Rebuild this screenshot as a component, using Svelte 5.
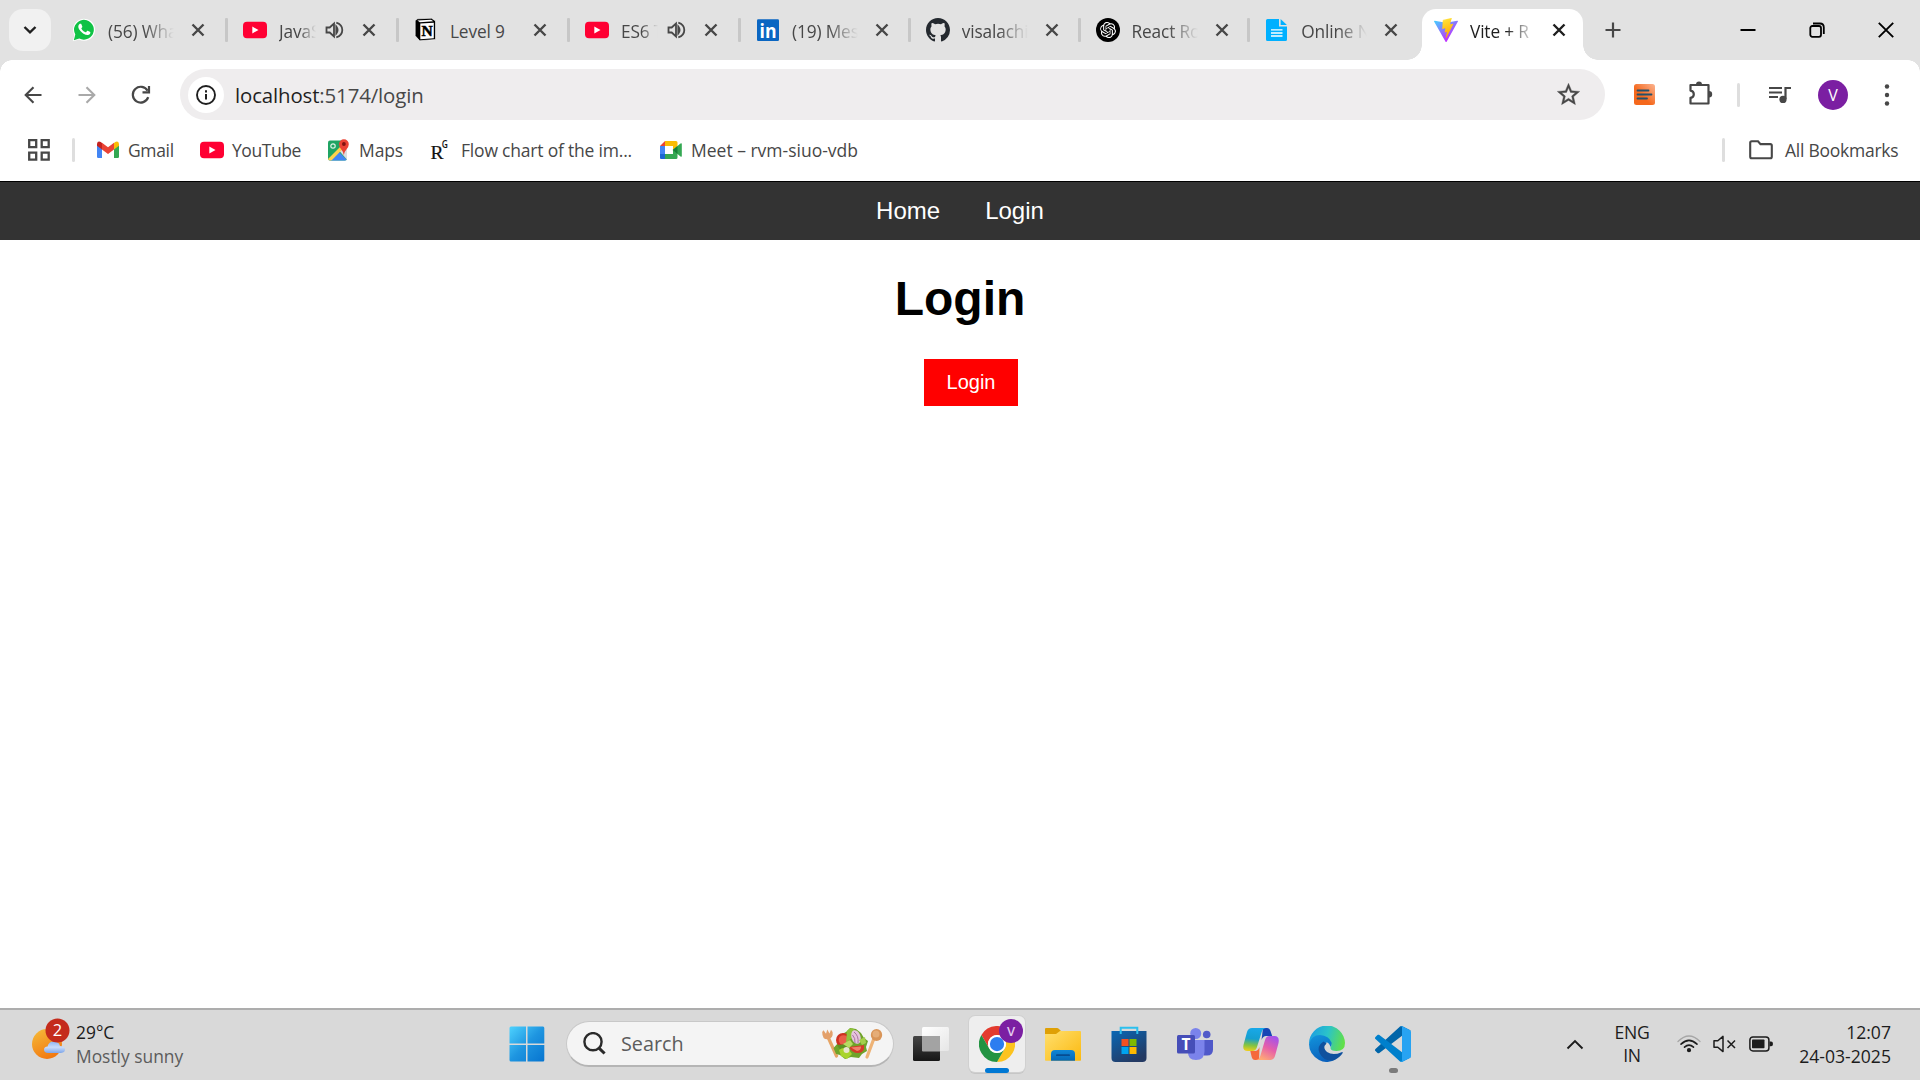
<script>
  const tabs = [
    { icon: 'whatsapp', title: '(56) Wha' },
    { icon: 'youtube', title: 'JavaS', audio: true },
    { icon: 'notion', title: 'Level 9' },
    { icon: 'youtube', title: 'ES6 T', audio: true },
    { icon: 'linkedin', title: '(19) Mes' },
    { icon: 'github', title: 'visalachi' },
    { icon: 'openai', title: 'React Ro' },
    { icon: 'notepad', title: 'Online N' },
    { icon: 'vite', title: 'Vite + R', active: true }
  ];
  const bookmarks = [
    { icon: 'gmail', title: 'Gmail', cls: 'b-gmail' },
    { icon: 'youtube', title: 'YouTube', cls: 'b-youtube' },
    { icon: 'maps', title: 'Maps', cls: 'b-maps' },
    { icon: 'rg', title: 'Flow chart of the im...', cls: 'b-flow' },
    { icon: 'meet', title: 'Meet – rvm-siuo-vdb', cls: 'b-meet' }
  ];
  const apps = ['taskview', 'chrome', 'explorer', 'store', 'teams', 'copilot', 'edge', 'vscode'];
</script>

{#snippet favicon(name)}
  <svg class="fav" width="24" height="24" viewBox="0 0 24 24">
    {#if name === 'whatsapp'}
      <path d="M.8 23.2 2.4 17A11 11 0 1 1 7 21.500Z" fill="#fff" />
      <path d="M1.800 22.200 3.300 16.600A9.900 9.900 0 1 1 7.300 20.500Z" fill="#10c245" />
      <path fill="#fff" transform="translate(.3 -.6)" d="M17.472 14.382c-.297-.149-1.758-.867-2.03-.967-.273-.099-.471-.148-.67.15-.197.297-.767.966-.94 1.164-.173.199-.347.223-.644.075-.297-.15-1.255-.463-2.39-1.475-.883-.788-1.48-1.761-1.653-2.059-.173-.297-.018-.458.13-.606.134-.133.298-.347.446-.52.149-.174.198-.298.298-.497.099-.198.05-.371-.025-.52-.075-.149-.669-1.612-.916-2.207-.242-.579-.487-.5-.669-.51-.173-.008-.371-.01-.57-.01-.198 0-.52.074-.792.372-.272.297-1.04 1.016-1.04 2.479 0 1.462 1.065 2.875 1.213 3.074.149.198 2.096 3.2 5.077 4.487.709.306 1.262.489 1.694.625.712.227 1.36.195 1.871.118.571-.085 1.758-.719 2.006-1.413.248-.694.248-1.289.173-1.413-.074-.124-.272-.198-.57-.347z" />
    {:else if name === 'youtube'}
      <rect x="0" y="3.700" width="24" height="16.600" rx="4" fill="#ff0033" />
      <path d="M9.300 8.600v6.800l6.200-3.400z" fill="#fff" />
    {:else if name === 'notion'}
      <path d="M1.200 2.600 3.600.8 17.500.2l4 2.800v18.500l-15.800 1.300-4.500-5z" fill="#000" stroke="#fff" stroke-width=".6" />
      <path d="M6.300 5.600 19.800 4.800v15.500L6.300 21.200z" fill="#fff" />
      <path d="M3.400 2.600 17 1.800l2.300 1.500-13.400.9z" fill="#fff" />
      <text x="13" y="18.300" text-anchor="middle" font-family="Liberation Serif, serif" font-weight="700" font-size="15.500" fill="#000" stroke="#000" stroke-width=".5">N</text>
    {:else if name === 'linkedin'}
      <rect x="1" y="1.200" width="22" height="21.800" rx="1.200" fill="#0a66c2" />
      <text x="12" y="19.600" text-anchor="middle" font-family="Open Sans, sans-serif" font-weight="700" font-size="19.500" textLength="17" lengthAdjust="spacingAndGlyphs" fill="#fff">in</text>
    {:else if name === 'github'}
      <path transform="scale(1.5)" fill="#24292f" d="M8 0C3.580 0 0 3.580 0 8c0 3.540 2.290 6.530 5.470 7.590.4.070.55-.17.55-.38 0-.19-.01-.82-.01-1.490-2.010.37-2.530-.49-2.690-.94-.09-.23-.48-.94-.82-1.130-.28-.15-.68-.52-.01-.53.63-.01 1.080.58 1.230.82.72 1.210 1.870.87 2.330.66.070-.52.28-.87.51-1.070-1.780-.2-3.640-.89-3.640-3.950 0-.87.31-1.590.82-2.150-.08-.2-.36-1.020.08-2.120 0 0 .67-.21 2.200.82a7.600 7.600 0 0 1 4 0c1.530-1.040 2.200-.82 2.200-.82.44 1.100.16 1.920.08 2.120.51.56.82 1.270.82 2.150 0 3.070-1.870 3.750-3.650 3.950.29.25.54.73.54 1.480 0 1.070-.01 1.930-.01 2.200 0 .21.15.46.55.38A8 8 0 0 0 16 8c0-4.420-3.580-8-8-8z" />
    {:else if name === 'openai'}
      <circle cx="12" cy="12" r="12" fill="#000" />
      <path transform="translate(4 4) scale(.667)" fill="#fff" d="M22.2819 9.8211a5.9847 5.9847 0 0 0-.5157-4.9108 6.0462 6.0462 0 0 0-6.5098-2.9A6.0651 6.0651 0 0 0 4.9807 4.1818a5.9847 5.9847 0 0 0-3.9977 2.9 6.0462 6.0462 0 0 0 .7427 7.0966 5.98 5.98 0 0 0 .511 4.9107 6.051 6.051 0 0 0 6.5146 2.9001A5.9847 5.9847 0 0 0 13.2599 24a6.0557 6.0557 0 0 0 5.7718-4.2058 5.9894 5.9894 0 0 0 3.9977-2.9001 6.0557 6.0557 0 0 0-.7475-7.0729zm-9.022 12.6081a4.4755 4.4755 0 0 1-2.8764-1.0408l.1419-.0804 4.7783-2.7582a.7948.7948 0 0 0 .3927-.6813v-6.7369l2.02 1.1686a.071.071 0 0 1 .038.052v5.5826a4.504 4.504 0 0 1-4.4945 4.4944zm-9.6607-4.1254a4.4708 4.4708 0 0 1-.5346-3.0137l.142.0852 4.783 2.7582a.7712.7712 0 0 0 .7806 0l5.8428-3.3685v2.3324a.0804.0804 0 0 1-.0332.0615L9.74 19.9502a4.4992 4.4992 0 0 1-6.1408-1.6464zM2.3408 7.8956a4.485 4.485 0 0 1 2.3655-1.9728V11.6a.7664.7664 0 0 0 .3879.6765l5.8144 3.3543-2.0201 1.1685a.0757.0757 0 0 1-.071 0l-4.8303-2.7865A4.504 4.504 0 0 1 2.3408 7.872zm16.5963 3.8558L13.1038 8.364 15.1192 7.2a.0757.0757 0 0 1 .071 0l4.8303 2.7913a4.4944 4.4944 0 0 1-.6765 8.1042v-5.6772a.79.79 0 0 0-.407-.667zm2.0107-3.0231l-.142-.0852-4.7735-2.7818a.7759.7759 0 0 0-.7854 0L9.409 9.2297V6.8974a.0662.0662 0 0 1 .0284-.0615l4.8303-2.7866a4.4992 4.4992 0 0 1 6.6802 4.66zM8.3065 12.863l-2.02-1.1638a.0804.0804 0 0 1-.038-.0567V6.0742a4.4992 4.4992 0 0 1 7.3757-3.4537l-.142.0805L8.704 5.459a.7948.7948 0 0 0-.3927.6813zm1.0976-2.3654l2.602-1.4998 2.6069 1.4998v2.9994l-2.5974 1.4997-2.6067-1.4997Z" />
    {:else if name === 'notepad'}
      <path d="M2.500 1H14v7.500h8V21.500q0 1.500-1.500 1.500h-18Q1 23 1 21.500v-19Q1 1 2.500 1z" fill="#00b0ff" />
      <path d="M15.600 1 21.900 7H15.600z" fill="#00b0ff" />
      <path d="M6 11.800h11.500M6 15h11.500M6 18h11.500" stroke="#fff" stroke-width="1.300" />
    {:else if name === 'vite'}
      <defs>
        <linearGradient id="v1" x1="0" y1="0" x2=".6" y2=".85"><stop stop-color="#41d1ff" /><stop offset="1" stop-color="#bd34fe" /></linearGradient>
        <linearGradient id="v2" x1=".4" y1="0" x2=".6" y2=".9"><stop stop-color="#ffea83" /><stop offset=".1" stop-color="#ffdd35" /><stop offset="1" stop-color="#ffa800" /></linearGradient>
      </defs>
      <g transform="scale(.0937)">
        <path fill="url(#v1)" d="M255.153 37.938L134.897 252.976c-2.483 4.440-8.862 4.466-11.382.048L.875 37.958c-2.746-4.814 1.371-10.646 6.827-9.670l120.385 21.517a6.537 6.537 0 0 0 2.322-.004l117.867-21.483c5.438-.991 9.574 4.796 6.877 9.620Z" />
        <path fill="url(#v2)" d="M185.432.063L96.440 17.501a3.268 3.268 0 0 0-2.634 3.014l-5.474 92.456a3.268 3.268 0 0 0 3.997 3.378l24.777-5.718c2.318-.535 4.413 1.507 3.936 3.838l-7.361 36.047c-.495 2.426 1.782 4.500 4.151 3.780l15.304-4.649c2.372-.72 4.652 1.360 4.150 3.788l-11.698 56.621c-.732 3.542 3.979 5.473 5.943 2.437l1.313-2.028l72.516-144.720c1.215-2.423-.88-5.186-3.540-4.672l-25.505 4.922c-2.396.462-4.435-1.770-3.759-4.114l16.646-57.705c.677-2.350-1.370-4.583-3.769-4.113Z" />
      </g>
    {:else if name === 'gmail'}
      <path d="M1 6.500v12.300q0 1.200 1.200 1.200H6v-9.500z" fill="#4285f4" />
      <path d="M23 6.500v12.300q0 1.200-1.200 1.200H18v-9.500z" fill="#34a853" />
      <path d="M18 5v6.500l5-3.800V6q-.5-3.500-3.800-2z" fill="#fbbc04" />
      <path d="M6 5v6.500L1 7.700V6q.5-3.500 3.800-2z" fill="#c5221f" />
      <path d="M6 4.800l6 4.500 6-4.500v6.700L12 16l-6-4.500z" fill="#ea4335" />
    {:else if name === 'maps'}
      <defs><clipPath id="mp"><rect x="1" y="2.500" width="19" height="20" rx="2" /></clipPath></defs>
      <g clip-path="url(#mp)">
        <rect x="1" y="2" width="20" height="21" fill="#1fa463" />
        <path d="M1 23 11 13 21 23z" fill="#4285f4" />
        <path d="M21 6v17L12 12.500z" fill="#dadce0" />
        <path d="M0 22 17.500 4.500l2.200 2.600L3 24z" fill="#ffd24d" />
        <circle cx="6" cy="8" r="2.200" fill="none" stroke="#d9f2e4" stroke-width="1.200" />
      </g>
      <path d="M16.800 17q-.3-3-2.300-5.200Q12 9 12 6.200A4.900 4.900 0 0 1 21.800 6.200Q21.800 9 19.200 11.800 17.200 14 16.800 17z" fill="#ea4335" />
      <circle cx="16.900" cy="6" r="1.900" fill="#811411" />
    {:else if name === 'rg'}
      <text x="1.500" y="20.800" font-family="Liberation Serif, serif" font-size="19.500" fill="#111" stroke="#111" stroke-width=".2">R</text>
      <text x="12.800" y="10" font-family="Open Sans, sans-serif" font-size="10" font-weight="600" textLength="6" lengthAdjust="spacingAndGlyphs" fill="#111">G</text>
    {:else if name === 'meet'}
      <path d="M6 3v5H1z" fill="#ea4335" />
      <path d="M1 8h5v8H1z" fill="#4285f4" />
      <path d="M1 16h5v5H2q-1 0-1-1z" fill="#1967d2" />
      <path d="M6 3h11q1.500 0 1.500 1.500V9L14 12V8H6z" fill="#fbbc04" />
      <path d="M6 16h8v-4l4.500 3v4.500q0 1.500-1.500 1.500H6z" fill="#34a853" />
      <path d="M13.700 12 21.500 5.500q1.300-.8 1.300.6v12q0 1.300-1.300.4z" fill="#34a853" />
      <path d="M13.700 12l4.800-4v8z" fill="#188038" />
    {/if}
  </svg>
{/snippet}

{#snippet app(name)}
  <svg width="36" height="36" viewBox="0 0 36 36">
    {#if name === 'taskview'}
      <defs>
        <linearGradient id="tv" x2="0" y2="1"><stop stop-color="#454545" /><stop offset="1" stop-color="#161616" /></linearGradient>
        <linearGradient id="tw" x2="1" y2="1"><stop stop-color="#fff" /><stop offset="1" stop-color="#e6e6e6" /></linearGradient>
      </defs>
      <rect x="0" y="10" width="27" height="25" rx="1.500" fill="url(#tv)" />
      <rect x="9" y="1" width="27" height="24" rx="1.500" fill="url(#tw)" />
      <path d="M9 10h18v15.500H10q-1 0-1-1z" fill="#a3a3a3" />
    {:else if name === 'chrome'}
      <g transform="scale(.75)">
        <path d="M24 12H44.800A24 24 0 0 0 3.200 12L13.600 30A12 12 0 0 1 24 12z" fill="#e33b2e" />
        <path d="M44.800 12A24 24 0 0 1 24 48L34.400 30A12 12 0 0 0 24 12z" fill="#fcc31e" />
        <path d="M24 48A24 24 0 0 1 3.200 12L13.600 30A12 12 0 0 0 34.400 30z" fill="#229342" />
        <circle cx="24" cy="24" r="12" fill="#fff" /><circle cx="24" cy="24" r="9.500" fill="#2c7df0" />
      </g>
    {:else if name === 'explorer'}
      <defs>
        <linearGradient id="ex" x2="1" y2="1"><stop stop-color="#ffdf6e" /><stop offset="1" stop-color="#fbb90f" /></linearGradient>
        <linearGradient id="ey" x2="0" y2="1"><stop stop-color="#0f86d6" /><stop offset="1" stop-color="#0668b6" /></linearGradient>
      </defs>
      <path d="M0 3q0-1 1-1h11q1 0 2 1l3 3v4H0z" fill="#dfa005" />
      <path d="M0 8h11l4-3h20q1 0 1 1v28q0 .8-.8.8H.8Q0 34.800 0 34z" fill="url(#ex)" />
      <path d="M6 34.800V28q0-4 4-4h16q4 0 4 4v6.800z" fill="url(#ey)" />
      <rect x="11" y="28.300" width="14" height="1.800" rx=".9" fill="#074c91" />
    {:else if name === 'store'}
      <defs><linearGradient id="st" x2=".6" y2="1"><stop stop-color="#0967b5" /><stop offset="1" stop-color="#243a63" /></linearGradient></defs>
      <path d="M9.700 8V1.800h16.600V8" fill="none" stroke="#2cc0ee" stroke-width="2" />
      <path d="M.5 5h35v27q0 4-4 4h-27q-4 0-4-4z" fill="url(#st)" />
      <path d="M9.700 5v3M26.300 5v3" stroke="#2cc0ee" stroke-width="2" />
      <path d="M10.500 13h7v7h-7z" fill="#f25022" /><path d="M18.500 13h7v7h-7z" fill="#7fba00" />
      <path d="M10.500 21h7v7h-7z" fill="#00a4ef" /><path d="M18.500 21h7v7h-7z" fill="#ffb900" />
    {:else if name === 'teams'}
      <circle cx="29.700" cy="8.500" r="3.800" fill="#5059c9" />
      <path d="M24 14h12v9.500q0 6-6 6h-3z" fill="#5059c9" />
      <circle cx="18.700" cy="7.500" r="5.500" fill="#7b83eb" />
      <path d="M11 14h16.500v11.500q0 8.500-8.500 8.500t-8-8.500z" fill="#7b83eb" />
      <rect x="0" y="9" width="18" height="18.500" rx="1.500" fill="#464eb8" />
      <text x="9" y="24" text-anchor="middle" font-family="Open Sans, sans-serif" font-weight="700" font-size="15.500" fill="#fff">T</text>
    {:else if name === 'copilot'}
      <defs>
        <linearGradient id="ca" x1=".3" y1="0" x2=".2" y2="1"><stop stop-color="#18a8e8" /><stop offset=".45" stop-color="#159fd0" /><stop offset=".75" stop-color="#86c43f" /><stop offset="1" stop-color="#f2cf1b" /></linearGradient>
        <linearGradient id="cb" x1=".8" y1="0" x2=".3" y2="1"><stop stop-color="#a052ee" /><stop offset=".5" stop-color="#e65fa9" /><stop offset="1" stop-color="#ffab75" /></linearGradient>
      </defs>
      <path d="M20 2h4q2.500 0 3.500 3l1.700 5H23q-3 0-4.500 4z" fill="#1746b5" />
      <path d="M9 2h14q-3.200.4-4.300 4L14 21q-1.200 4-4.500 4H4.500Q-1 25 .6 18.500L4 6q1.200-4 5-4z" fill="url(#ca)" />
      <path d="M16 34h-4q-2.500 0-3.300-3L7.300 25H12q3 0 4.500-4z" fill="#f56a3c" />
      <path d="M27 34H13q3.200-.4 4.300-4L22 14q1.200-4 4.500-4h5q5.500 0 3.900 7.500L32 30q-1.200 4-5 4z" fill="url(#cb)" />
    {:else if name === 'edge'}
      <defs>
        <linearGradient id="ea" x1="0" y1=".3" x2="1" y2=".5"><stop stop-color="#1b9de2" /><stop offset=".5" stop-color="#2bc3c9" /><stop offset="1" stop-color="#62e048" /></linearGradient>
        <linearGradient id="eb" x2=".3" y2="1"><stop stop-color="#1295dc" /><stop offset="1" stop-color="#0b62bd" /></linearGradient>
      </defs>
      <path d="M0 18A18 18 0 0 1 36 17Q36 25 27.500 25 21 25 21.500 21.500 23.500 19 21 15.500 17 11 10 11.500 3 12 0 18z" fill="url(#ea)" />
      <path d="M0 18Q2.500 9 11 9 20 9.500 22.500 16.500 23 19 21.500 21 19 13 14 19 10 27 18 32 21 34 27 33 19 38.500 10 34 0 28 0 18z" fill="url(#eb)" />
      <path d="M14.500 15.500Q7.500 20 10.500 27 15 36 25 34.200 31 31.500 33.700 27 34 25.500 32.500 26.200 24 30 18 26 13 21.500 17.500 17.500z" fill="#10519e" />
    {:else if name === 'vscode'}
      <g transform="scale(.36)">
        <path fill="#0065a9" d="M96.461 10.796L75.857.876C73.472-.273 70.622.212 68.750 2.083L1.299 63.583C-.516 65.237-.514 68.094 1.303 69.745L6.813 74.754C8.298 76.104 10.535 76.204 12.134 74.991L93.361 13.370C96.086 11.303 100 13.246 100 16.667V16.428C100 14.027 98.625 11.838 96.461 10.796Z" />
        <path fill="#0080cc" d="M96.461 89.204L75.857 99.125C73.472 100.273 70.622 99.788 68.750 97.917L1.299 36.417C-.516 34.763-.514 31.906 1.303 30.255L6.813 25.246C8.298 23.896 10.535 23.796 12.134 25.010L93.361 86.630C96.086 88.697 100 86.754 100 83.333V83.573C100 85.974 98.625 88.162 96.461 89.204Z" />
        <path fill="#27a3f2" d="M75.858 99.126C73.472 100.274 70.622 99.789 68.750 97.917 71.056 100.223 75 98.590 75 95.328V4.672C75 1.410 71.056-.223 68.750 2.083 70.622.211 73.472-.274 75.858.874L96.459 10.781C98.623 11.822 100 14.011 100 16.413V83.587C100 85.989 98.623 88.179 96.459 89.220Z" />
      </g>
    {/if}
  </svg>
{/snippet}

<div class="screen">
  <div class="strip">
    <div class="tabsearch">
      <svg width="14" height="10" viewBox="0 0 14 10"><path d="M1.500 2l5.500 5.300L12.500 2" fill="none" stroke="#1f1f1f" stroke-width="2.400" /></svg>
    </div>
    <div class="tabs">
      {#each tabs as tab}
        <div class="tab" class:active={tab.active} class:audio={tab.audio}>
          {@render favicon(tab.icon)}
          <span class="title" class:full={tab.title === 'Level 9'}>{tab.title}</span>
          {#if tab.audio}
            <svg class="vol" width="19" height="18" viewBox="0 0 19 18" fill="none" stroke="#474747" stroke-width="1.800">
              <path d="M1.500 6.500h3.200L9 2.600v12.800L4.700 11.500H1.500z" /><path d="M11.300 5.600q2.600 3.400 0 6.800zM11.300 1.600q6 2 6 7.400t-6 7.400" />
            </svg>
          {/if}
          <svg class="close" width="14" height="14" viewBox="0 0 14 14"><path d="M1.500 1.500l11 11M12.500 1.500l-11 11" stroke={tab.active ? '#1f1f1f' : '#474747'} stroke-width="2.400" /></svg>
        </div>
      {/each}
    </div>
    <svg class="plus" width="16" height="16" viewBox="0 0 16 16"><path d="M8 .5v15M.5 8h15" stroke="#474747" stroke-width="2.200" /></svg>
    <div class="wincontrols">
      <svg width="16" height="16" viewBox="0 0 16 16"><path d="M.5 8h15" stroke="#000" stroke-width="2" /></svg>
      <svg width="16" height="16" viewBox="0 0 16 16" fill="none" stroke="#000" stroke-width="1.800"><rect x="1.300" y="4" width="10.700" height="10.800" rx="2" /><path d="M4 1.500h7q3.800 0 3.800 3.800V12" /></svg>
      <svg width="16" height="16" viewBox="0 0 16 16"><path d="M.8.8l14.400 14.400M15.200.8.8 15.200" stroke="#000" stroke-width="1.900" /></svg>
    </div>
  </div>

  <div class="chrome">
    <div class="toolbar">
      <svg class="back" width="18" height="18" viewBox="0 0 18 18" fill="none" stroke="#474747" stroke-width="2.100"><path d="M17.500 9H2M9.500 1.200 1.700 9l7.800 7.800" /></svg>
      <svg class="fwd" width="18" height="18" viewBox="0 0 18 18" fill="none" stroke="#a9a9a9" stroke-width="2.100"><path d="M.5 9H16M8.500 1.200 16.300 9l-7.800 7.800" /></svg>
      <svg class="reload" width="20" height="20" viewBox="0 0 20 20" fill="none" stroke="#474747" stroke-width="2.200"><path d="M17.200 12.200A7.900 7.900 0 1 1 16.600 5.800" /><path d="M18 1v6.300h-6.500" /></svg>
      <div class="omnibox">
        <div class="info">
          <svg width="20" height="20" viewBox="0 0 20 20"><circle cx="10" cy="10" r="9" fill="none" stroke="#1f1f1f" stroke-width="1.900" /><path d="M10 9v5.500M10 5.200v2.200" stroke="#1f1f1f" stroke-width="2" /></svg>
        </div>
        <span class="url"><b>localhost</b>:5174/login</span>
        <svg class="star" width="24" height="24" viewBox="0 0 24 24"><path fill="#474747" stroke="#474747" stroke-width=".3" d="M22 9.240l-7.190-.62L12 2 9.190 8.630 2 9.240l5.460 4.730L5.820 21 12 17.270 18.180 21l-1.630-7.030L22 9.240zM12 15.400l-3.760 2.270 1-4.280-3.320-2.880 4.380-.38L12 6.100l1.710 4.040 4.380.38-3.320 2.880 1 4.280L12 15.400z" /></svg>
      </div>
      <svg class="ext" width="21" height="21" viewBox="0 0 21 21">
        <defs><linearGradient id="og" x1="1" y1="0" x2=".4" y2=".6"><stop stop-color="#fbb491" /><stop offset="1" stop-color="#f5681c" /></linearGradient></defs>
        <rect width="21" height="21" rx="2.500" fill="url(#og)" /><path d="M3.500 6.500h11M3.500 10.500h14M3.500 14.500h9.500" stroke="#24506a" stroke-width="1.800" stroke-linecap="round" />
      </svg>
      <svg class="puzzle" width="26" height="26" viewBox="0 0 26 26">
        <path d="M3.500 5h18v18.500h-18v-5.700q3.300-.5 3.300-3.600t-3.300-3.600z" fill="none" stroke="#474747" stroke-width="2.200" stroke-linejoin="round" />
        <path d="M9 4.500a3 3 0 0 1 6 0zM22 11a3.200 3.200 0 0 1 0 6.400z" fill="#474747" />
      </svg>
      <i class="sep s1"></i>
      <svg class="media" width="24" height="20" viewBox="0 0 24 20"><path d="M1 3h13M1 7.500h13M1 12h9" stroke="#474747" stroke-width="2" /><path d="M17.500 14V3h5.500" fill="none" stroke="#474747" stroke-width="2.200" /><circle cx="15" cy="14.400" r="3.600" fill="#474747" /></svg>
      <span class="avatar">V</span>
      <svg class="dots" width="6" height="22" viewBox="0 0 6 22" fill="#474747"><circle cx="3" cy="2.500" r="2.200" /><circle cx="3" cy="11" r="2.200" /><circle cx="3" cy="19.500" r="2.200" /></svg>
    </div>
    <div class="bookmarks">
      <svg class="grid" width="22" height="22" viewBox="0 0 22 22" fill="none" stroke="#474747" stroke-width="2.300"><path d="M1.200 1.200h7v7h-7zM13.700 1.200h7v7h-7zM1.200 13.700h7v7h-7zM13.700 13.700h7v7h-7z" /></svg>
      <i class="sep s2"></i>
      {#each bookmarks as b}
        <div class="bm {b.cls}">{@render favicon(b.icon)}<span>{b.title}</span></div>
      {/each}
      <i class="sep s3"></i>
      <svg class="folder" width="24" height="20" viewBox="0 0 24 20"><path d="M1.200 2.700q0-1.500 1.500-1.500h6.300l2.500 2.900h9.800q1.500 0 1.500 1.500v11.200q0 1.500-1.500 1.500H2.700q-1.500 0-1.500-1.500z" fill="none" stroke="#474747" stroke-width="2.100" /></svg>
      <span class="allbm">All Bookmarks</span>
    </div>
  </div>

  <div class="page">
    <nav><a href="#home">Home</a><a href="#login">Login</a></nav>
    <h1>Login</h1>
    <button>Login</button>
  </div>

  <div class="taskbar">
    <div class="weather">
      <svg width="40" height="44" viewBox="0 0 40 44">
        <defs>
          <linearGradient id="su" x2=".5" y2="1"><stop stop-color="#f5bd3b" /><stop offset="1" stop-color="#f27a12" /></linearGradient>
          <linearGradient id="cl" x2="0" y2="1"><stop stop-color="#8db4f2" /><stop offset=".5" stop-color="#c9dcfa" /><stop offset="1" stop-color="#7ea6ea" /></linearGradient>
        </defs>
        <circle cx="16" cy="26" r="15" fill="url(#su)" />
        <path d="M17 35q-4-.3-4-3.300t3.500-3.200Q18 23 23.500 23.500q4.500.3 5.500 4.500 5 0 5 3.600 0 3.200-4 3.400z" fill="url(#cl)" />
        <circle cx="26.500" cy="12.500" r="12" fill="#c42b1c" />
        <text x="26.500" y="18.200" text-anchor="middle" font-family="Open Sans, sans-serif" font-size="16.500" fill="#fff">2</text>
      </svg>
      <div class="wtext"><span>29°C</span><span class="dim">Mostly sunny</span></div>
    </div>
    <svg class="start" width="36" height="36" viewBox="0 0 36 36">
      <defs><linearGradient id="wn" gradientUnits="userSpaceOnUse" x2="36" y2="36"><stop stop-color="#4fd4ff" /><stop offset=".5" stop-color="#1e95e0" /><stop offset="1" stop-color="#0673cf" /></linearGradient></defs>
      <path d="M2 .5h15v17H.5V2Q.5.5 2 .5zM18.500.5H34q1.300 0 1.300 1.500v15.500H18.500zM.5 19H17v16.500H2Q.5 35.500.5 34zM18.500 19h16.800v15q0 1.500-1.300 1.500H18.500z" fill="url(#wn)" />
    </svg>
    <div class="search">
      <svg width="23" height="23" viewBox="0 0 23 23" fill="none" stroke="#2a2a2a"><circle cx="10" cy="9.700" r="8.600" stroke-width="2.400" /><path d="M16 16.200l5.600 5.300" stroke-width="3" /></svg>
      <span>Search</span>
      <svg class="salad" width="62" height="32" viewBox="0 0 62 32">
        <path d="M7 9l8.500 19" stroke="#e6a566" stroke-width="3.200" stroke-linecap="round" />
        <path d="M1.200 4q0 8 6 7.300Q12.500 10 11.600 4L10 1.700 8.500 5.500 6.300 1.500 5 5.800 2.500 2.200z" fill="#e3a06a" />
        <path d="M53.500 9 46 29" stroke="#eeb376" stroke-width="3.200" stroke-linecap="round" />
        <ellipse cx="55.500" cy="7" rx="5.700" ry="6" fill="#d99558" /><ellipse cx="55" cy="6" rx="3.500" ry="3.600" fill="#e5ad78" />
        <path d="M12.500 20 17 15l2-8 6-3 4-4 6 1 5 4 3 5 4 3-2 6 1 4-5 3-3 4-8-1-6 2-5-4-4-1z" fill="#6fa32a" />
        <circle cx="22" cy="12" r="7" fill="#cf3021" /><circle cx="22.500" cy="12" r="4.800" fill="#e95e48" />
        <path d="M26 3q4-5 8-1l-3 8-6 5z" fill="#8fc43b" />
        <ellipse cx="35" cy="9" rx="4.500" ry="7" fill="#e4c5dc" transform="rotate(-18 35 9)" />
        <path d="M33 4q5 4 4 11M31.500 7q3 3 2.500 8" stroke="#a26699" fill="none" stroke-width=".9" />
        <path d="M38 12l6-3 1 6-4 2z" fill="#a4cf4a" />
        <path d="M28 19l15-2q1 8-6 8-6 0-9-6z" fill="#d43b28" /><path d="M30 19.500l10-1q0 4-4 4.500z" fill="#f0806a" />
        <path d="M16 17l10-1 3 5-9 2z" fill="#5d9322" />
        <path d="M18 22q5-4 10 0l3 4-5 5-6-3z" fill="#a9d42e" /><circle cx="25.500" cy="22" r="3" fill="#e9e5cf" />
        <path d="M22 16l7-4 3 4-4 4z" fill="#b6dc62" />
      </svg>
    </div>
    <div class="apps">
      {#each apps as a}
        <div class="app" class:current={a === 'chrome'}>
          {@render app(a)}
          {#if a === 'chrome'}<span class="badge">V</span><i class="running wide"></i>{/if}
          {#if a === 'vscode'}<i class="running"></i>{/if}
        </div>
      {/each}
    </div>
    <div class="tray">
      <svg class="caret" width="18" height="11" viewBox="0 0 18 11"><path d="M1.500 9.500 9 2l7.500 7.500" fill="none" stroke="#1c1c1c" stroke-width="1.900" /></svg>
      <div class="lang"><span>ENG</span><span>IN</span></div>
      <svg class="wifi" width="24" height="18" viewBox="0 0 24 18" fill="none" stroke="#1c1c1c" stroke-width="1.600" stroke-linecap="round"><path d="M1 6.500Q12-4.500 23 6.500" stroke="#a6a6a6" stroke-width="1.300" /><path d="M4 9.200q8-7.600 16 0M7.500 12.200q4.500-4.200 9 0" /><circle cx="12" cy="15.200" r="1.300" fill="#1c1c1c" /></svg>
      <svg class="mute" width="24" height="18" viewBox="0 0 24 18" fill="none" stroke="#1c1c1c" stroke-width="1.500" stroke-linejoin="round"><path d="M1 5.800h3.800L10 1.400v15.200L4.800 12.200H1z" /><path d="M14.500 5.500l7.500 7.500M22 5.500 14.500 13" /></svg>
      <svg class="battery" width="24" height="16" viewBox="0 0 24 16"><rect x=".9" y=".9" width="19" height="14" rx="3" fill="none" stroke="#1c1c1c" stroke-width="1.500" /><rect x="3" y="3.500" width="12.500" height="8.800" rx=".8" fill="#1c1c1c" /><path d="M20.500 5.500h1.500q2 0 2 2.400t-2 2.400h-1.500z" fill="#1c1c1c" /></svg>
      <div class="clock"><span>12:07</span><span>24-03-2025</span></div>
    </div>
  </div>
</div>

<style>
  :global(body) { margin: 0; overflow: hidden; }
  .screen { width: 1920px; height: 1080px; display: flex; flex-direction: column; background: #fff; font-family: "Open Sans", "Noto Sans", sans-serif; font-size: 17.500px; color: #474747; overflow: hidden; }
  svg { display: block; flex: none; }
  span { white-space: nowrap; }

  .strip { height: 60px; flex: none; display: flex; background: #e2e2e2; align-items: center; }
  .tabsearch { width: 42px; height: 42px; margin-left: 9px; border-radius: 14px; background: #f1f1f1; display: grid; place-items: center; flex: none; }
  .tabs { display: flex; align-self: stretch; margin-left: 5px; }
  .tab { box-sizing: border-box; width: 171px; height: 60px; padding-left: 16px; display: flex; align-items: center; position: relative; flex: none; }
  .tab:nth-child(n+5) { width: 169.750px; }
  .tab::after { content: ""; position: absolute; right: -1px; top: 18px; width: 3px; height: 24px; border-radius: 1px; background: #c7c7c7; }
  .tab:nth-child(8)::after { display: none; }
  .title { margin: 4px 0 0 12px; width: 66px; font-size: 17.300px; letter-spacing: -.15px; line-height: 26px; mask-image: linear-gradient(90deg, #000 55%, transparent 100%); }
  .title.full { mask-image: none; }
  .audio .title { width: 37px; }
  .vol { margin-left: 9px; }
  .audio .close { margin-left: 18px; }
  .close { margin-left: 17px; }
  .tab.active { width: 161px; height: 51px; margin: 9px 0 0 3px; padding: 0 0 9px 12px; background: #fff; border-radius: 14px 14px 0 0; color: #1f1f1f; }
  .active .close { margin-left: 16px; }
  .tab.active::before, .tab.active::after { content: ""; display: block; position: absolute; top: auto; bottom: 0; width: 15px; height: 15px; border-radius: 0; background: radial-gradient(circle at 0 0, transparent 14.500px, #fff 15px); }
  .tab.active::before { left: -15px; }
  .tab.active::after { right: -15px; background: radial-gradient(circle at 100% 0, transparent 14.500px, #fff 15px); }
  .plus { margin-left: 22px; }
  .wincontrols { margin-left: auto; margin-right: 26px; padding-bottom: 1px; display: flex; gap: 53px; }

  .chrome { height: 121px; flex: none; background: radial-gradient(circle at 12px 12px, #fff 11.500px, #e2e2e2 12px) 0 0 / 12px 12px no-repeat, radial-gradient(circle at 0 12px, #fff 11.500px, #e2e2e2 12px) 100% 0 / 12px 12px no-repeat, #fff; }
  .toolbar { height: 51px; padding-top: 9px; display: flex; align-items: center; }
  .back { margin-left: 24px; }
  .fwd { margin-left: 36px; }
  .reload { margin-left: 35px; }
  .omnibox { width: 1425px; height: 51px; margin-left: 29px; flex: none; border-radius: 26px; background: #efedee; display: flex; align-items: center; }
  .info { width: 36px; height: 36px; margin-left: 8px; border-radius: 50%; background: #fff; display: grid; place-items: center; }
  .url { margin-left: 11px; font-size: 20.400px; letter-spacing: -.12px; line-height: 28px; }
  .url b { font-weight: 400; color: #1f1f1f; }
  .star { width: 27px; height: 27px; margin-left: auto; margin-right: 23px; }
  .ext { margin-left: 29px; }
  .puzzle { margin: -3px 0 0 32px; }
  .sep { width: 3px; height: 24px; border-radius: 1.500px; background: #dedede; flex: none; }
  .s1 { margin-left: 24px; }
  .media { margin-left: 28px; }
  .avatar { width: 30px; height: 30px; margin-left: 26px; border-radius: 50%; background: #7b1fa2; color: #fff; font-size: 16px; line-height: 30px; text-align: center; }
  .dots { margin-left: 36px; }

  .bookmarks { height: 60px; display: flex; align-items: center; }
  .grid { margin-left: 28px; }
  .s2 { margin-left: 22px; }
  .bm { display: flex; align-items: center; flex: none; }
  .bm > span { margin-left: 8px; line-height: 26px; }
  .b-gmail { margin-left: 21px; width: 104px; letter-spacing: -.35px; }
  .b-youtube { width: 127px; letter-spacing: -.45px; }
  .b-maps { width: 102px; letter-spacing: -.1px; }
  .b-flow { width: 230px; letter-spacing: -.2px; }
  .b-meet { letter-spacing: 0; }
  .s3 { margin-left: auto; margin-right: 24px; }
  .allbm { width: 114px; margin: 0 21px 0 12px; line-height: 26px; letter-spacing: -.25px; }

  .page { flex: 1; border-top: 1px solid #000; box-sizing: border-box; font-family: "Liberation Sans", Arial, sans-serif; display: flex; flex-direction: column; align-items: center; }
  nav { width: 100%; height: 58px; background: #333; display: flex; justify-content: center; align-items: center; gap: 45px; flex: none; }
  nav a { color: #fff; font-size: 24px; text-decoration: none; }
  h1 { margin: 31px 0 0; font-size: 48px; line-height: 56px; font-weight: 700; color: #000; }
  button { margin: 32px 0 0 22px; width: 94px; height: 47px; padding: 0; border: 0; background: #f00; color: #fff; font: 20px "Liberation Sans", Arial, sans-serif; }

  .taskbar { height: 72px; box-sizing: border-box; flex: none; border-top: 2px solid #adadad; padding-bottom: 2px; background: #d9d9d9; display: flex; align-items: center; color: #1c1c1c; }
  .weather { display: flex; width: 478px; margin-left: 31px; flex: none; align-items: center; }
  .weather svg { margin-top: -9px; }
  .wtext { display: flex; flex-direction: column; margin: -1px 0 0 5px; line-height: 24px; font-size: 17.400px; }
  .dim { color: #5c5c5c; }
  .start { margin-right: 21px; }
  .search { width: 328px; height: 46px; box-sizing: border-box; border: 1.500px solid #c8c8c8; border-bottom: 2px solid #b5b5b5; border-radius: 23px; background: #f4f4f4; display: flex; align-items: center; padding: 0 10px 0 16px; flex: none; color: #5c5c5c; }
  .search span { margin-left: 15px; font-size: 19.800px; }
  .salad { margin-left: auto; }
  .apps { display: flex; gap: 10px; margin-left: 9px; }
  .app { width: 56px; height: 56px; display: grid; place-items: center; position: relative; border-radius: 6px; }
  .current { background: #eee; box-shadow: 0 0 0 1px #d0d0d0, 0 2px 0 #c6c6c6; }
  .badge { position: absolute; left: 30px; top: 3px; width: 24px; height: 24px; border-radius: 50%; background: #7b1fa2; color: #e4c9ee; font-size: 13px; font-weight: 600; line-height: 24px; text-align: center; }
  .running { position: absolute; left: 24px; bottom: -1px; width: 9px; height: 5px; border-radius: 3px; background: #7b7b7b; }
  .wide { left: 16px; width: 24px; background: #0078d4; }
  .tray { margin-left: auto; display: flex; align-items: center; font-size: 17.600px; }
  .lang { width: 60px; margin-left: 18px; display: flex; flex-direction: column; align-items: center; line-height: 23px; letter-spacing: -.3px; }
  .wifi { margin-left: 15px; }
  .mute { margin-left: 12px; }
  .battery { margin-left: 12px; }
  .clock { width: 110px; margin: 0 29px 0 8px; display: flex; flex-direction: column; align-items: flex-end; line-height: 24px; }
</style>
